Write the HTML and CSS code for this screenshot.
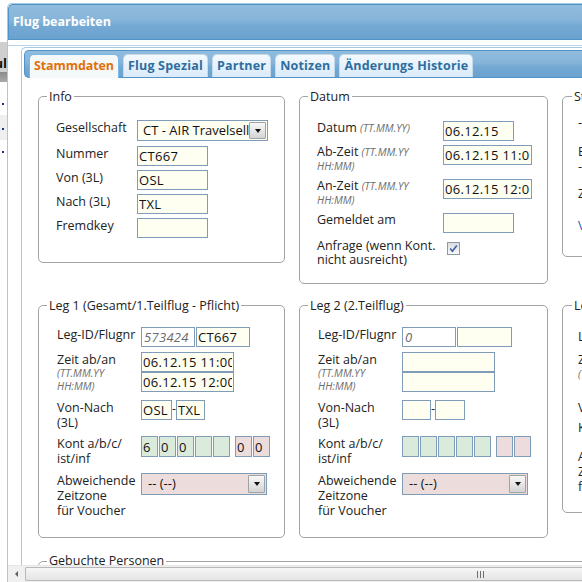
FILE: index.html
```html
<!DOCTYPE html>
<html lang="de">
<head>
<meta charset="utf-8">
<title>Flug bearbeiten</title>
<link rel="stylesheet" href="styles.css">
</head>
<body>
<div class="screen">
  <div class="behind">
    <div class="b-blank"></div>
    <div class="b-head"><span class="b-text">ul</span></div>
    <div class="b-bar"></div>
    <div class="b-row r1"><span class="dot"></span></div>
    <div class="b-row r2"><span class="dot"></span></div>
    <div class="b-row r3"><span class="dot"></span></div>
  </div>
  <div class="dialog">
    <div class="titlebar"><span class="title">Flug bearbeiten</span></div>
    <div class="viewport">
      <div class="tabs">
        <ul class="tabnav">
          <li class="tab active">Stammdaten</li>
          <li class="tab">Flug Spezial</li>
          <li class="tab">Partner</li>
          <li class="tab">Notizen</li>
          <li class="tab">Änderungs Historie</li>
        </ul>
        <div class="panel">
          <fieldset class="fs fs-info">
            <legend>Info</legend>
            <div class="form form-info">
              <div class="frow first">
                <span class="lbl">Gesellschaft</span>
                <div class="select yellow sel-info"><span class="sel-val">CT - AIR Travelsell</span><span class="sel-btn"><span class="tri"></span></span></div>
              </div>
              <div class="frow"><span class="lbl">Nummer</span><input class="inp yellow w71" type="text" value="CT667"></div>
              <div class="frow"><span class="lbl">Von (3L)</span><input class="inp yellow w71" type="text" value="OSL"></div>
              <div class="frow"><span class="lbl">Nach (3L)</span><input class="inp yellow w71" type="text" value="TXL"></div>
              <div class="frow"><span class="lbl">Fremdkey</span><input class="inp yellow w71" type="text" value=""></div>
            </div>
          </fieldset>

          <fieldset class="fs fs-datum">
            <legend>Datum</legend>
            <div class="form form-datum">
              <div class="frow"><span class="lbl">Datum <span class="hint">(TT.MM.YY)</span></span><input class="inp yellow w71" type="text" value="06.12.15"></div>
              <div class="frow"><span class="lbl">Ab-Zeit <span class="hint">(TT.MM.YY HH:MM)</span></span><input class="inp yellow w89" type="text" value="06.12.15 11:00"></div>
              <div class="frow"><span class="lbl">An-Zeit <span class="hint">(TT.MM.YY HH:MM)</span></span><input class="inp yellow w89" type="text" value="06.12.15 12:00"></div>
              <div class="frow"><span class="lbl">Gemeldet am</span><input class="inp yellow w71" type="text" value=""></div>
              <div class="frow check-row"><span class="lbl">Anfrage (wenn Kont. nicht ausreicht)</span><span class="checkbox"><svg width="11" height="11" viewBox="0 0 11 11"><polyline points="2.2,5.6 4.4,8.2 8.8,2.4" fill="none" stroke="#3a5ea8" stroke-width="1.6"/></svg></span></div>
            </div>
          </fieldset>

          <fieldset class="fs fs-c3 fs-status">
            <legend>Status</legend>
            <div class="c3">- keine Angabe -</div>
            <div class="c3 s2">Erfasst von</div>
            <div class="c3">- unbekannt -</div>
            <div class="c3 s4">Zuletzt geändert</div>
            <div class="c3 s5 link">Verlauf anzeigen</div>
          </fieldset>

          <fieldset class="fs fs-leg">
            <legend>Leg 1 (Gesamt/1.Teilflug - Pflicht)</legend>
            <div class="form form-leg">
              <div class="frow"><span class="lbl">Leg-ID/Flugnr</span><input class="inp ro w54" type="text" value="573424"><input class="inp yellow w54 gap1" type="text" value="CT667"></div>
              <div class="frow"><span class="lbl">Zeit ab/an <span class="hint hint-block">(TT.MM.YY HH:MM)</span></span>
                <div class="stack"><input class="inp yellow w93" type="text" value="06.12.15 11:00"><input class="inp yellow w93" type="text" value="06.12.15 12:00"></div>
              </div>
              <div class="frow"><span class="lbl">Von-Nach<br>(3L)</span><input class="inp yellow w31" type="text" value="OSL"><span class="dash">-</span><input class="inp yellow w29" type="text" value="TXL"></div>
              <div class="frow"><span class="lbl">Kont a/b/c/<br>ist/inf</span>
                <div class="kont">
                  <input class="inp k green" type="text" value="6"><input class="inp k green" type="text" value="0"><input class="inp k green" type="text" value="0"><input class="inp k green" type="text" value=""><input class="inp k green" type="text" value="">
                  <span class="kgap"></span>
                  <input class="inp k pink" type="text" value="0"><input class="inp k pink" type="text" value="0">
                </div>
              </div>
              <div class="frow"><span class="lbl">Abweichende<br>Zeitzone<br>für Voucher</span>
                <div class="select pink sel-leg"><span class="sel-val">-- (--)</span><span class="sel-btn"><span class="tri"></span></span></div>
              </div>
            </div>
          </fieldset>

          <fieldset class="fs fs-leg fs-leg2">
            <legend>Leg 2 (2.Teilflug)</legend>
            <div class="form form-leg">
              <div class="frow"><span class="lbl">Leg-ID/Flugnr</span><input class="inp ro w54" type="text" value="0"><input class="inp yellow w55 gap1" type="text" value=""></div>
              <div class="frow"><span class="lbl">Zeit ab/an <span class="hint hint-block">(TT.MM.YY HH:MM)</span></span>
                <div class="stack"><input class="inp yellow w93" type="text" value=""><input class="inp yellow w93" type="text" value=""></div>
              </div>
              <div class="frow"><span class="lbl">Von-Nach<br>(3L)</span><input class="inp yellow w29" type="text" value=""><span class="dash">-</span><input class="inp yellow w30" type="text" value=""></div>
              <div class="frow"><span class="lbl">Kont a/b/c/<br>ist/inf</span>
                <div class="kont">
                  <input class="inp k green" type="text" value=""><input class="inp k green" type="text" value=""><input class="inp k green" type="text" value=""><input class="inp k green" type="text" value=""><input class="inp k green" type="text" value="">
                  <span class="kgap"></span>
                  <input class="inp k pink" type="text" value=""><input class="inp k pink" type="text" value="">
                </div>
              </div>
              <div class="frow"><span class="lbl">Abweichende<br>Zeitzone<br>für Voucher</span>
                <div class="select pink sel-leg"><span class="sel-val">-- (--)</span><span class="sel-btn"><span class="tri"></span></span></div>
              </div>
            </div>
          </fieldset>

          <fieldset class="fs fs-c3 fs-leg3">
            <legend>Leg 3 (3.Teilflug)</legend>
            <div class="c3">Leg-ID/Flugnr</div>
            <div class="c3 l2">Zeit ab/an</div>
            <div class="c3 hint">(TT.MM.YY HH:MM)</div>
            <div class="c3 l4">Von-Nach (3L)</div>
            <div class="c3 l5">Kont a/b/c/ist/inf</div>
            <div class="c3 l6">Abweichende</div>
            <div class="c3">Zeitzone</div>
            <div class="c3">für Voucher</div>
          </fieldset>

          <fieldset class="fs fs-persons">
            <legend>Gebuchte Personen</legend>
          </fieldset>
        </div>
      </div>
    </div>
    <div class="hscroll">
      <span class="hs-arrow"><span class="hs-tri"></span></span>
      <span class="hs-thumb"><span class="grip"></span><span class="grip"></span><span class="grip"></span></span>
    </div>
  </div>
</div>
</body>
</html>
```

FILE: styles.css
```css
* { box-sizing: border-box; }
html, body { margin: 0; padding: 0; }
body {
  width: 582px;
  height: 582px;
  overflow: hidden;
  background: #fff;
  font-family: "Open Sans", "DejaVu Sans", sans-serif;
  font-size: 12.5px;
  color: #222;
}
.screen { display: flex; height: 582px; overflow: hidden; }

/* page behind the dialog */
.behind { flex: 0 0 7px; width: 7px; overflow: hidden; display: flex; flex-direction: column; }
.b-blank { height: 42px; }
.b-head { height: 30px; background: #cfcfcf; display: flex; justify-content: flex-end; align-items: flex-end; }
.b-text { font-weight: bold; font-size: 13px; line-height: 16px; color: #111; padding-bottom: 1px; white-space: nowrap; }
.b-bar { height: 10px; background: linear-gradient(#8a8a8a, #a9a9a9); }
.b-row { display: flex; align-items: flex-start; padding-left: 2px; }
.r1 { height: 33px; padding-top: 21px; }
.r2 { height: 25px; padding-top: 13px; background: #efefef; }
.r3 { height: 22px; padding-top: 11px; }
.dot { width: 2px; height: 2px; background: #12348a; }

/* dialog */
.dialog {
  flex: 0 0 900px;
  width: 900px;
  margin-top: 3px;
  border: 1px solid #a6c9e2;
  border-right: 0;
  border-bottom: 0;
  border-radius: 5px 0 0 0;
  background: #fff;
  display: flex;
  flex-direction: column;
}
.titlebar {
  height: 36px;
  border: 1px solid #4f93c8;
  border-right: 0;
  border-radius: 5px 0 0 0;
  background: linear-gradient(to bottom, #90bcdd 0%, #86b4d9 45%, #74a9d3 60%, #6aa2cf 100%);
  display: flex;
  align-items: center;
  padding-left: 4px;
}
.title { color: #fff; font-weight: bold; font-size: 12.5px; line-height: 16px; }

.viewport {
  margin-top: 5px;
  height: 526px;
  border-top: 1px solid #b9d3e8;
  overflow: hidden;
  padding: 1px 0 0 13px;
}
.tabs {
  width: 880px;
  border: 1px solid #a6c9e2;
  border-right: 0;
  border-bottom: 0;
  border-radius: 5px 0 0 0;
  padding: 2px 0 0 2px;
  min-height: 540px;
}
.tabnav {
  display: flex;
  align-items: flex-start;
  margin: 0;
  padding: 3px 0 0 4px;
  list-style: none;
  height: 28px;
  border: 1px solid #4f93c8;
  border-right: 0;
  border-radius: 5px 0 0 5px;
  background: linear-gradient(to bottom, #90bcdd 0%, #86b4d9 45%, #74a9d3 60%, #6aa2cf 100%);
}
.tab {
  margin-right: 4px;
  padding: 0 4px;
  height: 23px;
  line-height: 21px;
  border: 1px solid #c5dbec;
  border-bottom: 0;
  border-radius: 5px 5px 0 0;
  background: linear-gradient(to bottom, #f4f9fe 0%, #e6f1fc 50%, #dbebfa 100%);
  color: #2e6e9e;
  font-weight: bold;
  font-size: 12.5px;
  letter-spacing: 0.2px;
  white-space: nowrap;
}
.tab.active {
  height: 24px;
  margin-bottom: -1px;
  background: #f5f8f9;
  border-color: #79b7e7;
  color: #e17009;
  letter-spacing: -0.1px;
}

.panel {
  padding: 12px 0 0 14px;
  display: grid;
  grid-template-columns: 247px 249px 249px;
  column-gap: 14px;
  row-gap: 15px;
  align-items: start;
  width: max-content;
}

/* fieldsets */
.fs {
  margin: 0;
  min-width: 0;
  border: 1px solid #a3a3a3;
  border-radius: 5px;
  padding: 0 0 0 17px;
}
.fs legend {
  margin-left: -9px;
  padding: 0 2px;
  line-height: 14px;
  font-size: 12.5px;
  color: #222;
  white-space: nowrap;
}
.fs-info { padding-top: 16px; padding-bottom: 24px; }
.fs-datum { padding-top: 17px; padding-bottom: 14px; }
.fs-leg { padding-top: 14px; padding-bottom: 18px; padding-left: 18px; }
.fs-leg legend { margin-left: -10px; }
.fs-persons { grid-column: 1 / -1; height: 60px; margin-top: 1px; }

.form { display: flex; flex-direction: column; }
.frow { display: flex; align-items: flex-start; }
.lbl { flex: none; }

.form-info { gap: 4px; }
.form-info .first { margin-bottom: 1px; }
.form-info .lbl { width: 81px; line-height: 13px; padding-top: 1px; }

.form-datum { gap: 4px; }
.form-datum .lbl { width: 126px; line-height: 14px; padding-bottom: 2px; }
.form-datum .check-row { margin-top: 2px; }

.form-leg { gap: 5px; }
.form-leg .lbl { width: 84px; line-height: 15px; padding-bottom: 1.5px; white-space: nowrap; }

.hint { font-style: italic; font-size: 10.5px; color: #6e6e6e; }
.hint-block { display: block; line-height: 13.4px; white-space: normal; width: 80px; }

/* inputs */
.inp {
  display: block;
  flex: none;
  height: 20px;
  margin: 0;
  padding: 0 1px;
  border: 1px solid #7f9db9;
  border-radius: 0;
  font-family: "Open Sans", "DejaVu Sans", sans-serif;
  font-size: 13px;
  letter-spacing: 0.3px;
  line-height: 18px;
  color: #111;
  outline: none;
}
.yellow { background: #fefef1; }
.pink { background: #ecdcdc; }
.green { background: #dbebdb; }
.ro { background: #fff; font-style: italic; color: #6a6a6a; padding-left: 2px; }
.w29 { width: 29px; }
.w30 { width: 30px; }
.w31 { width: 31px; }
.w54 { width: 54px; }
.w55 { width: 55px; }
.w71 { width: 71px; }
.w89 { width: 89px; }
.w93 { width: 93px; }
.gap1 { margin-left: 1px; }
.stack { display: flex; flex-direction: column; }
.dash { width: 4px; line-height: 18px; text-align: center; }
.kont { display: flex; }
.k { width: 17px; margin-right: 1px; height: 21px; }
.kgap { width: 4px; }

.select {
  flex: none;
  display: flex;
  align-items: stretch;
  border: 1px solid #7f9db9;
}
.sel-info { width: 131px; height: 21px; }
.sel-leg { width: 126px; height: 22px; }
.sel-val {
  flex: 1;
  min-width: 0;
  overflow: hidden;
  white-space: nowrap;
  padding-left: 5px;
  font-size: 13px;
  line-height: 18px;
  color: #111;
}
.sel-leg .sel-val { padding-left: 6px; line-height: 19px; }
.sel-btn {
  flex: 0 0 17px;
  margin: 1px 1px 1px 0;
  border: 1px solid #9ea3a8;
  border-radius: 1px;
  background: linear-gradient(to bottom, #f8f8f8 0%, #e6e6e6 50%, #d4d4d4 100%);
  display: flex;
  align-items: center;
  justify-content: center;
}
.tri {
  width: 0;
  height: 0;
  border-left: 3.5px solid transparent;
  border-right: 3.5px solid transparent;
  border-top: 4px solid #111;
  margin-top: 1px;
}

.checkbox {
  flex: none;
  width: 13px;
  height: 13px;
  margin: 3px 0 0 4px;
  border: 1px solid #8e99a8;
  background: linear-gradient(to bottom, #dcdcdc, #f8f8f8);
  display: flex;
  align-items: center;
  justify-content: center;
}

/* third column (mostly cut off) */
.fs-c3 { padding-left: 15px; }
.fs-c3 legend { margin-left: -6px; }
.c3 { line-height: 15px; white-space: nowrap; }
.fs-status { padding-top: 11px; padding-bottom: 23px; }
.s2 { margin-top: 14px; }
.s4 { margin-top: 12px; }
.s5 { margin-top: 17px; }
.link { color: #2a5db0; }
.fs-leg3 { padding-top: 16px; padding-bottom: 18px; }
.fs-leg3 .hint { display: block; }
.l2 { margin-top: 8px; }
.l4 { margin-top: 18px; }
.l5 { margin-top: 5px; }
.l6 { margin-top: 14px; }

/* horizontal scrollbar */
.hscroll {
  flex: none;
  height: 17px;
  display: flex;
  background: #f0f0f0;
  border-top: 1px solid #e6e6e6;
}
.hs-arrow { flex: 0 0 17px; display: flex; align-items: center; justify-content: center; }
.hs-tri {
  width: 0;
  height: 0;
  border-top: 3px solid transparent;
  border-bottom: 3px solid transparent;
  border-right: 3px solid #606060;
}
.hs-thumb {
  flex: 1;
  margin: 1px 0;
  border: 1px solid #b8b8b8;
  border-right: 0;
  border-radius: 2px 0 0 2px;
  background: linear-gradient(to bottom, #f6f6f6, #e4e4e4);
  display: flex;
  align-items: center;
  padding-left: 451px;
  gap: 2px;
}
.grip { width: 1px; height: 7px; background: #6e6e6e; }
```
